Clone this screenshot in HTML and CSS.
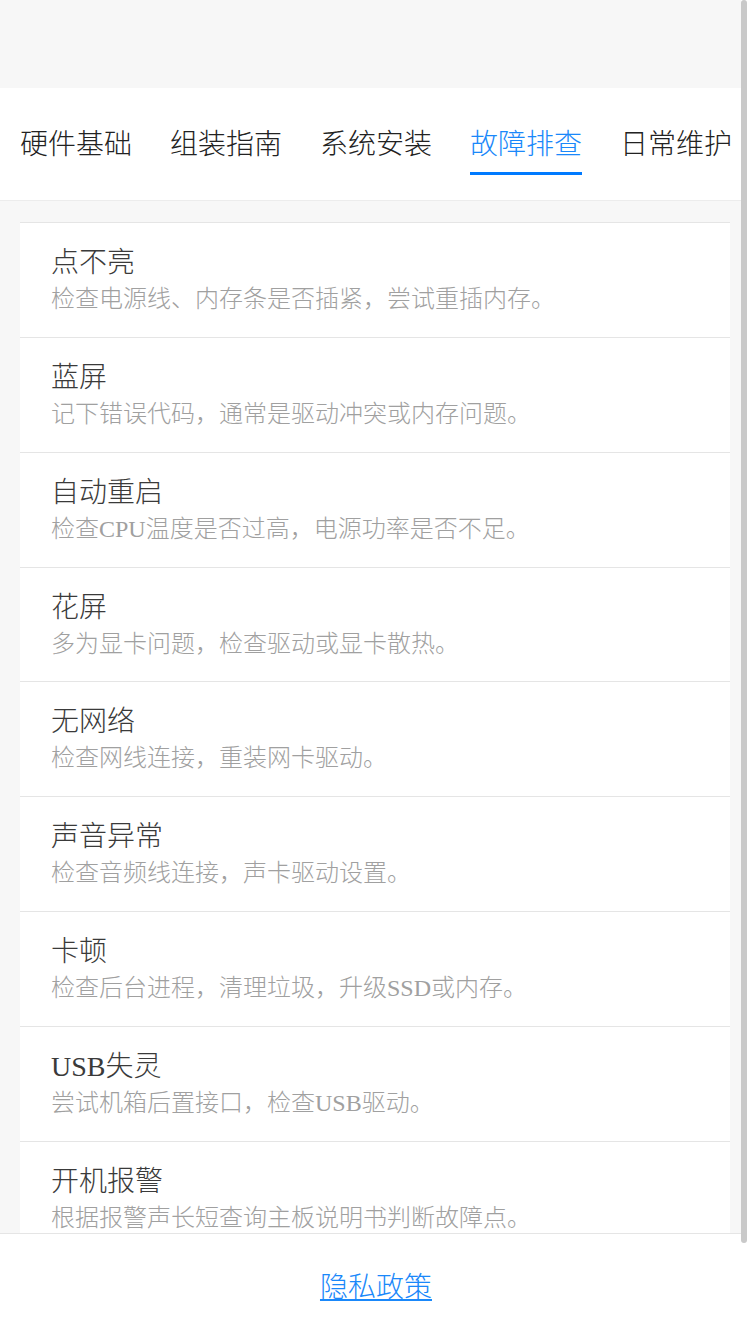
FILE: index.html
```html
<!DOCTYPE html>
<html lang="zh-CN">
<head>
  <meta charset="UTF-8">
  <title>电脑维修指南</title>
  <link rel="stylesheet" href="styles.css">
</head>
<body>
  <div class="top-bar"></div>

  <div class="tabs">
    <div class="tab">硬件基础</div>
    <div class="tab">组装指南</div>
    <div class="tab">系统安装</div>
    <div class="tab active">故障排查</div>
    <div class="tab">日常维护</div>
  </div>

  <div class="content">
    <div class="card">
      <div class="item">
        <div class="item-title">点不亮</div>
        <div class="item-desc">检查电源线、内存条是否插紧，尝试重插内存。</div>
      </div>
      <div class="item">
        <div class="item-title">蓝屏</div>
        <div class="item-desc">记下错误代码，通常是驱动冲突或内存问题。</div>
      </div>
      <div class="item">
        <div class="item-title">自动重启</div>
        <div class="item-desc">检查CPU温度是否过高，电源功率是否不足。</div>
      </div>
      <div class="item">
        <div class="item-title">花屏</div>
        <div class="item-desc">多为显卡问题，检查驱动或显卡散热。</div>
      </div>
      <div class="item">
        <div class="item-title">无网络</div>
        <div class="item-desc">检查网线连接，重装网卡驱动。</div>
      </div>
      <div class="item">
        <div class="item-title">声音异常</div>
        <div class="item-desc">检查音频线连接，声卡驱动设置。</div>
      </div>
      <div class="item">
        <div class="item-title">卡顿</div>
        <div class="item-desc">检查后台进程，清理垃圾，升级SSD或内存。</div>
      </div>
      <div class="item">
        <div class="item-title">USB失灵</div>
        <div class="item-desc">尝试机箱后置接口，检查USB驱动。</div>
      </div>
      <div class="item">
        <div class="item-title">开机报警</div>
        <div class="item-desc">根据报警声长短查询主板说明书判断故障点。</div>
      </div>
    </div>
  </div>

  <div class="footer">
    <a href="#" class="footer-link">隐私政策</a>
  </div>

  <div class="scroll-track"><div class="scroll-thumb"></div></div>
</body>
</html>
```

FILE: styles.css
```css
body {
  margin: 0;
  font-family: "Liberation Serif", "Noto Sans CJK SC", serif;
  font-weight: 300;
  background-color: #f7f7f7;
}
.top-bar {
  height: 88px;
  background-color: #f7f7f7;
}
.tabs {
  display: flex;
  gap: 38px;
  height: 112px;
  padding: 0 0 0 20px;
  background-color: #fff;
  border-bottom: 1px solid #ececec;
  overflow: hidden;
}
.tab {
  flex-shrink: 0;
  padding-top: 37px;
  font-size: 28px;
  line-height: 40px;
  color: #222;
  white-space: nowrap;
}
.tab.active {
  color: #1a88fa;
}
.tab.active::after {
  content: "";
  display: block;
  height: 3px;
  margin-top: 7px;
  background-color: #007aff;
}
.content {
  padding: 21px 22px 178px 20px;
}
.card {
  background-color: #fff;
  border-top: 1px solid #e5e5e5;
}
.item {
  padding: 21px 30px 20.86px 31px;
  border-bottom: 1px solid #e5e5e5;
}
.item-title {
  font-size: 28px;
  line-height: 38px;
  color: #3a3a3a;
}
.item-desc {
  font-size: 24px;
  line-height: 34px;
  color: #a0a0a0;
}
.footer {
  position: fixed;
  left: 0;
  right: 0;
  bottom: 0;
  height: 102px;
  display: flex;
  align-items: center;
  justify-content: center;
  background-color: #fff;
  border-top: 1px solid #e5e5e5;
}
.footer-link {
  font-size: 28px;
  color: #1a88fa;
  text-decoration: underline;
}
/* barra de desplazamiento dibujada encima */
.scroll-track {
  position: fixed;
  top: 0;
  right: 0;
  width: 11px;
  height: 100%;
  background-color: #fff;
}
.scroll-thumb {
  width: 6px;
  height: 1243px;
  border-radius: 3px;
  background-color: #c9c9c9;
}
```
